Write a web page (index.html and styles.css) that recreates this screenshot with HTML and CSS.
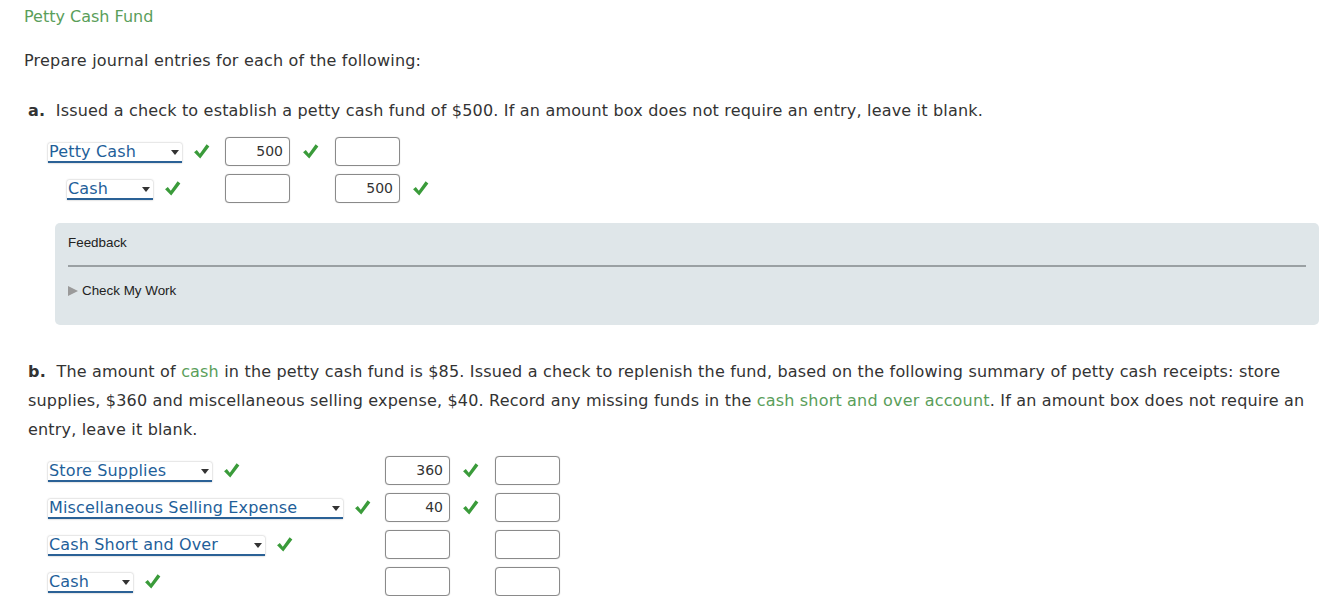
FILE: index.html
```html
<!DOCTYPE html>
<html lang="en">
<head>
    <meta charset="UTF-8">
    <title>Petty Cash Fund</title>
    <link rel="stylesheet" href="styles.css">
</head>
<body>

<div class="page">
    <div class="title">Petty Cash Fund</div>
    <p class="intro">Prepare journal entries for each of the following:</p>

    <p class="question"><b>a.</b>&nbsp; Issued a check to establish a petty cash fund of $500. If an amount box does not require an entry, leave it blank.</p>

    <div class="journal journal-a">
        <div class="account">
            <span class="select sel-petty">Petty Cash<i class="arrow"></i></span>
            <svg class="check" viewBox="0 0 16 16"><path d="M1 8.6 L3.6 6.6 L6.4 10.2 L12.8 1.2 L15.4 3.2 L6.8 14.6 Z"/></svg>
        </div>
        <div class="amount"><span class="box">500</span><svg class="check" viewBox="0 0 16 16"><path d="M1 8.6 L3.6 6.6 L6.4 10.2 L12.8 1.2 L15.4 3.2 L6.8 14.6 Z"/></svg></div>
        <div class="amount"><span class="box"></span></div>

        <div class="account credit">
            <span class="select sel-cash-a">Cash<i class="arrow"></i></span>
            <svg class="check" viewBox="0 0 16 16"><path d="M1 8.6 L3.6 6.6 L6.4 10.2 L12.8 1.2 L15.4 3.2 L6.8 14.6 Z"/></svg>
        </div>
        <div class="amount"><span class="box"></span></div>
        <div class="amount"><span class="box">500</span><svg class="check" viewBox="0 0 16 16"><path d="M1 8.6 L3.6 6.6 L6.4 10.2 L12.8 1.2 L15.4 3.2 L6.8 14.6 Z"/></svg></div>
    </div>

    <div class="feedback">
        <div class="feedback-title">Feedback</div>
        <hr>
        <div class="check-work"><i class="tri"></i>Check My Work</div>
    </div>

    <p class="question long"><b>b.</b>&nbsp; The amount of <span class="term">cash</span> in the petty cash fund is $85. Issued a check to replenish the fund, based on the following summary of petty cash receipts: store supplies, $360 and miscellaneous selling expense, $40. Record any missing funds in the <span class="term">cash short and over account</span>. If an amount box does not require an entry, leave it blank.</p>

    <div class="journal journal-b">
        <div class="account">
            <span class="select sel-store">Store Supplies<i class="arrow"></i></span>
            <svg class="check" viewBox="0 0 16 16"><path d="M1 8.6 L3.6 6.6 L6.4 10.2 L12.8 1.2 L15.4 3.2 L6.8 14.6 Z"/></svg>
        </div>
        <div class="amount"><span class="box">360</span><svg class="check" viewBox="0 0 16 16"><path d="M1 8.6 L3.6 6.6 L6.4 10.2 L12.8 1.2 L15.4 3.2 L6.8 14.6 Z"/></svg></div>
        <div class="amount"><span class="box"></span></div>

        <div class="account">
            <span class="select sel-misc">Miscellaneous Selling Expense<i class="arrow"></i></span>
            <svg class="check" viewBox="0 0 16 16"><path d="M1 8.6 L3.6 6.6 L6.4 10.2 L12.8 1.2 L15.4 3.2 L6.8 14.6 Z"/></svg>
        </div>
        <div class="amount"><span class="box">40</span><svg class="check" viewBox="0 0 16 16"><path d="M1 8.6 L3.6 6.6 L6.4 10.2 L12.8 1.2 L15.4 3.2 L6.8 14.6 Z"/></svg></div>
        <div class="amount"><span class="box"></span></div>

        <div class="account">
            <span class="select sel-short">Cash Short and Over<i class="arrow"></i></span>
            <svg class="check" viewBox="0 0 16 16"><path d="M1 8.6 L3.6 6.6 L6.4 10.2 L12.8 1.2 L15.4 3.2 L6.8 14.6 Z"/></svg>
        </div>
        <div class="amount"><span class="box"></span></div>
        <div class="amount"><span class="box"></span></div>

        <div class="account">
            <span class="select sel-cash-b">Cash<i class="arrow"></i></span>
            <svg class="check" viewBox="0 0 16 16"><path d="M1 8.6 L3.6 6.6 L6.4 10.2 L12.8 1.2 L15.4 3.2 L6.8 14.6 Z"/></svg>
        </div>
        <div class="amount"><span class="box"></span></div>
        <div class="amount"><span class="box"></span></div>
    </div>
</div>

</body>
</html>
```

FILE: styles.css
```css
body {
    margin: 0;
    font-family: "DejaVu Sans", Verdana, sans-serif;
    color: #333;
    background-color: #fff;
}
.page {
    padding: 6px 2px 0 24px;
}
.title {
    font-size: 16px;
    line-height: 22px;
    color: #5a9e5a;
}
.intro {
    margin: 22px 0 0;
    font-size: 16px;
    line-height: 22px;
    letter-spacing: 0.2px;
}
.question {
    margin: 28px 0 0 4px;
    font-size: 16px;
    line-height: 22px;
    letter-spacing: 0.18px;
}
.question.long {
    margin-top: 32px;
    margin-right: 8px;
    line-height: 29px;
}
.term {
    color: #5a9e5a;
}
.journal {
    display: grid;
    row-gap: 8px;
    margin-left: 24px;
}
.journal-a {
    margin-top: 15px;
    grid-template-columns: 177px 110px 110px;
}
.journal-b {
    margin-top: 12px;
    grid-template-columns: 337px 110px 110px;
}
.account, .amount {
    display: flex;
    align-items: center;
    height: 29px;
}
.account.credit {
    padding-left: 19px;
}
.select {
    position: relative;
    display: inline-block;
    box-sizing: border-box;
    height: 20px;
    margin-top: 2px;
    padding-left: 1px;
    font-size: 16px;
    line-height: 17px;
    letter-spacing: 0.15px;
    color: #1f5f9a;
    background-color: #fff;
    border-bottom: 2px solid #2a6196;
    box-shadow: 0 0 2px rgba(0, 0, 0, 0.35);
    border-radius: 2px 2px 0 0;
}
.arrow {
    position: absolute;
    right: 3px;
    top: 7px;
    width: 0;
    height: 0;
    border-left: 4px solid transparent;
    border-right: 4px solid transparent;
    border-top: 5px solid #333;
}
.sel-petty { width: 134px; }
.sel-cash-a { width: 86px; }
.sel-store { width: 164px; }
.sel-misc { width: 295px; }
.sel-short { width: 217px; }
.sel-cash-b { width: 85px; }
.check {
    width: 17px;
    height: 17px;
    margin-left: 11px;
    fill: #3a9b3a;
}
.amount .check {
    margin-left: 12px;
}
.box {
    display: inline-block;
    box-sizing: border-box;
    width: 65px;
    height: 29px;
    padding: 0 6px;
    font-size: 14px;
    line-height: 27px;
    text-align: right;
    color: #333;
    border: 1px solid #8a8a8a;
    border-radius: 4px;
    box-shadow: 0 0 1px rgba(0, 0, 0, 0.3);
    background-color: #fff;
}
.feedback {
    margin: 20px 0 0 31px;
    padding: 12px 13px 26px;
    background-color: #dfe6e9;
    border-radius: 5px;
    font-family: "Liberation Sans", Arial, sans-serif;
    font-size: 13.4px;
    line-height: 16px;
    color: #222;
}
.feedback hr {
    margin: 14px 0 16px;
    border: none;
    border-top: 2px solid #9aa0a3;
}
.check-work {
    display: flex;
    align-items: center;
}
.tri {
    display: inline-block;
    width: 0;
    height: 0;
    margin-right: 4px;
    border-top: 5px solid transparent;
    border-bottom: 5px solid transparent;
    border-left: 10px solid #9a9a9a;
}
```
